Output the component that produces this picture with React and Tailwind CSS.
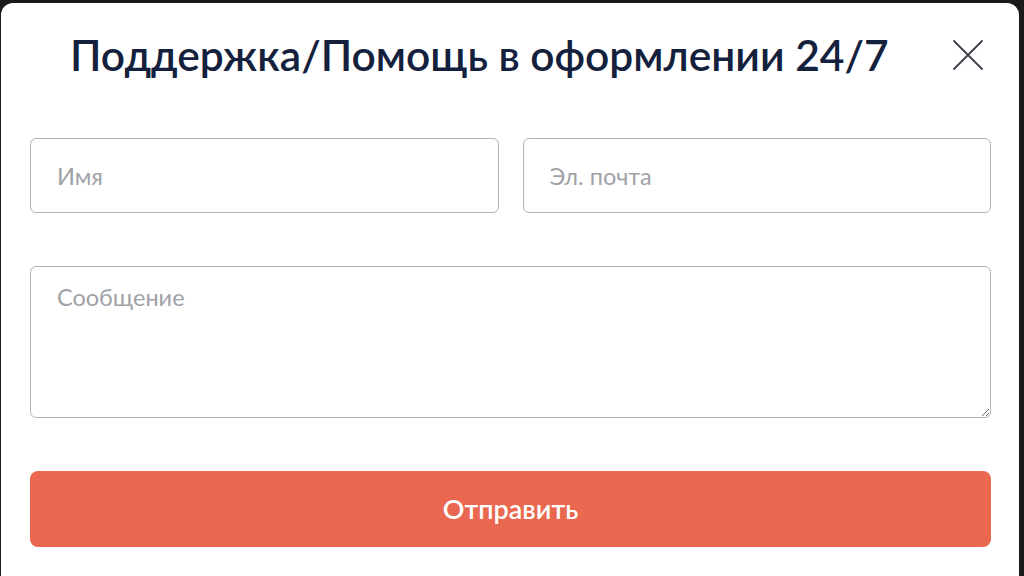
const fieldClass =
    'w-full rounded-md border border-[#b4b4b4] bg-white px-[26px] text-[23.5px] text-[#333] placeholder:text-[#a1a2a8] outline-none'

const CloseIcon = () => (
    <svg width="32" height="32" viewBox="0 0 32 32" fill="none" stroke="currentColor" strokeWidth="1.8" strokeLinecap="round">
        <path d="M2 2L30 30M30 2L2 30" />
    </svg>
)

const App = () => {
    return (
        <div className="h-[576px] overflow-hidden bg-[#1b1b1d] pt-[3px] pl-[1px] pr-[5px] font-['Lato',sans-serif]">
            <div className="h-[600px] rounded-xl bg-white pl-[29px] pr-[28px] pt-[26px]">
                <div className="flex items-center justify-between">
                    <h2 className="pl-[40px] text-[42.5px] font-semibold leading-[52px] text-[#14213d]">
                        Поддержка/Помощь в оформлении 24/7
                    </h2>
                    <button className="mr-[3px] flex h-[40px] w-[40px] items-center justify-center text-[#3b404b]">
                        <CloseIcon />
                    </button>
                </div>

                <form className="mt-[57px] flex flex-col gap-[53px]" onSubmit={e => e.preventDefault()}>
                    <div className="grid grid-cols-2 gap-[24px]">
                        <input type="text" placeholder="Имя" className={`${fieldClass} h-[75px]`} />
                        <input type="email" placeholder="Эл. почта" className={`${fieldClass} h-[75px]`} />
                    </div>
                    <textarea
                        placeholder="Сообщение"
                        className={`${fieldClass} h-[152px] pt-[13px]`}
                    />
                    <button
                        type="submit"
                        className="h-[76px] w-full rounded-lg bg-[#e9684f] text-[27px] font-semibold text-white"
                    >
                        Отправить
                    </button>
                </form>
            </div>
        </div>
    )
}

export default App
